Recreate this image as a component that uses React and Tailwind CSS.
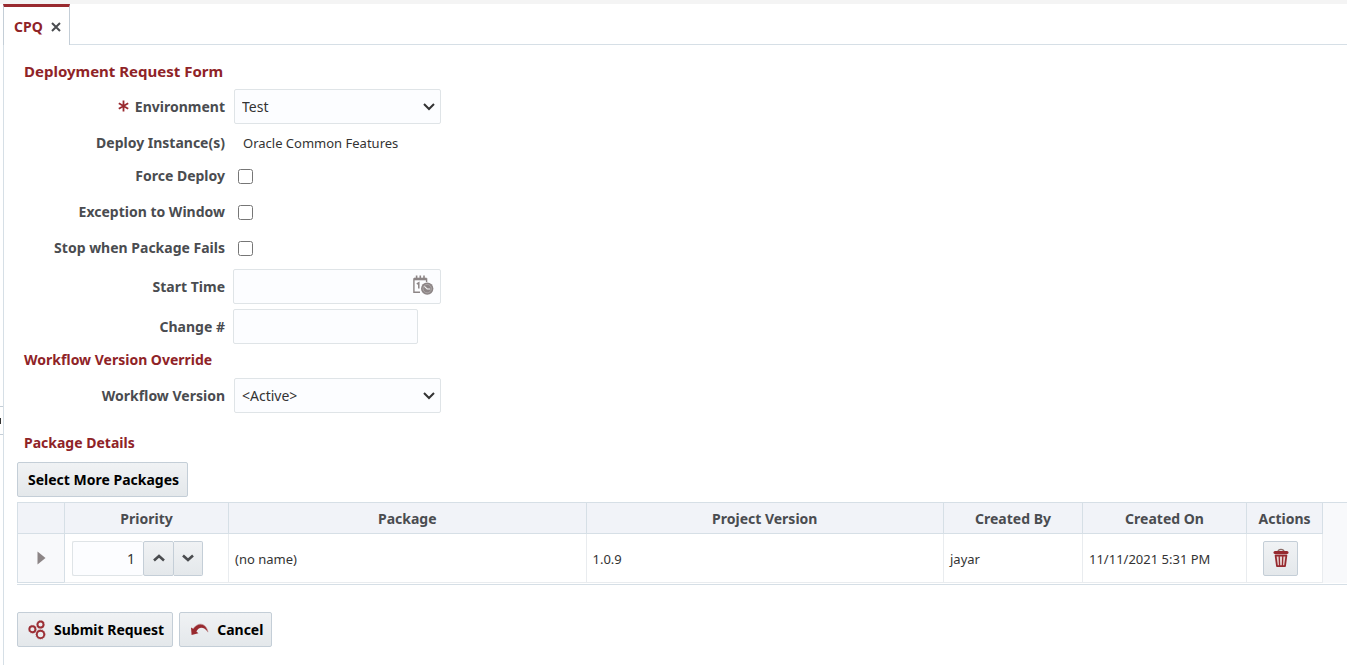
import React, { useState } from 'react';

const packages = [
  { id: 1, name: '(no name)', version: '1.0.9', createdBy: 'jayar', createdOn: '11/11/2021 5:31 PM' },
];

const buttonClass =
  'flex items-center h-[35px] border border-[#c4ced7] rounded-xs bg-gradient-to-b from-[#f0f2f4] to-[#e4e8eb] text-black font-bold';

const inputClass = 'h-[35px] border border-[#dfe4e7] rounded-xs bg-[#fcfdff] text-[#333333]';

const GearsIcon = () => (
  <svg width="18" height="20" viewBox="0 0 18 20" fill="none" stroke="#9c2f35" aria-hidden="true">
    <g strokeWidth="1.9">
      <circle cx="4.4" cy="9.3" r="3" />
      <circle cx="12.5" cy="4.5" r="3" />
      <circle cx="12.5" cy="14.4" r="3.7" />
    </g>
    <g strokeWidth="0.8" strokeDasharray="1.2 1.2" opacity="0.5">
      <circle cx="4.4" cy="9.3" r="4" />
      <circle cx="12.5" cy="4.5" r="4" />
      <circle cx="12.5" cy="14.4" r="4.9" />
    </g>
  </svg>
);

const UndoIcon = () => (
  <svg width="19" height="14" viewBox="0 0 19 14" aria-hidden="true">
    <path
      d="M1 4.5 L1.6 12 L8.4 10.2 L6.4 8.4 C8.4 4 13.6 2.6 18 9.2 C16.4 0.4 8.4 -1.8 3.2 5.8 Z"
      fill="#992a2f"
    />
    <path d="M18 9.2 C16.4 0.4 8.4 -1.8 3.2 5.8" fill="none" stroke="#b98588" strokeWidth="0.6" />
  </svg>
);

const TrashIcon = () => (
  <svg width="16" height="20" viewBox="0 0 16 20" fill="none" stroke="#96292e" aria-hidden="true">
    <path d="M5 3.5 C5.4 0.6 10.6 0.6 11 3.5" stroke="#8a6a66" strokeWidth="1.4" />
    <path d="M2 4.6 H14" strokeWidth="3" strokeLinecap="round" />
    <path d="M2.6 7.5 L4 18.2 H12 L13.4 7.5 Z" fill="#e6d3d1" strokeWidth="1.8" strokeLinejoin="round" />
    <path d="M6.2 8 L6.6 18 M9.8 8 L9.4 18" strokeWidth="1.3" />
  </svg>
);

const CalendarClockIcon = () => (
  <svg width="21" height="21" viewBox="0 0 21 21" fill="none" stroke="#8c8586" aria-hidden="true">
    <path d="M7 17.3 H0.9 V4 H13.6 V7" strokeWidth="1.4" />
    <path d="M1 4 H13.6" strokeWidth="2.6" />
    <path d="M3.6 0.5 V4 M7.3 0.5 V4 M11 0.5 V4" strokeWidth="1.6" />
    <path d="M3.8 9 L5.8 7.8 V13.5" strokeWidth="1.5" />
    <circle cx="14.2" cy="13.6" r="6.2" fill="#8c8586" stroke="none" />
    <circle cx="14.2" cy="13.6" r="4.2" stroke="#b4aeaf" strokeWidth="0.8" />
    <path d="M11.4 11.4 L14.2 14 H17.2" stroke="#f4f4f4" strokeWidth="1.1" />
  </svg>
);

const Chevron = ({ up }) => (
  <svg width="12" height="8" viewBox="0 0 12 8" fill="none" stroke="#4a4c4f" strokeWidth="2.6" aria-hidden="true">
    <path d={up ? 'M1 6.5 L6 2 L11 6.5' : 'M1 1.5 L6 6 L11 1.5'} />
  </svg>
);

const Field = ({ label, htmlFor, required, className = '', children }) => (
  <div className={`flex items-center ${className}`}>
    <label htmlFor={htmlFor} className="w-52 shrink-0 text-right font-bold text-[#4a4c50]">
      {required && (
        <svg className="inline-block mr-1.5 mb-1" width="11" height="12" viewBox="0 0 11 12" stroke="#992a2f" strokeWidth="1.8" aria-hidden="true">
          <path d="M5.5 0.5 V11.5 M0.8 3.2 L10.2 8.8 M10.2 3.2 L0.8 8.8" />
        </svg>
      )}
      {label}
    </label>
    {children}
  </div>
);

const Select = ({ id, value, onChange, children }) => (
  <div className="relative ml-[9px] w-[207px]">
    <select
      id={id}
      value={value}
      onChange={(e) => onChange(e.target.value)}
      className={`${inputClass} w-full appearance-none pl-[7px] pr-6`}
    >
      {children}
    </select>
    <svg
      className="absolute right-1.5 top-[14px] pointer-events-none"
      width="12"
      height="8"
      viewBox="0 0 12 8"
      fill="none"
      stroke="#333333"
      strokeWidth="2"
      aria-hidden="true"
    >
      <path d="M1 1 L6 6 L11 1" />
    </svg>
  </div>
);

const Heading = ({ className, children }) => (
  <h2 className={`pl-[7px] flex items-center font-bold text-[#8f2327] ${className}`}>{children}</h2>
);

const App = () => {
  const [environment, setEnvironment] = useState('Test');
  const [workflow, setWorkflow] = useState('active');
  const [options, setOptions] = useState({ force: false, exception: false, stop: false });
  const [startTime, setStartTime] = useState('');
  const [change, setChange] = useState('');
  const [priority, setPriority] = useState(1);

  const toggle = (key) => setOptions({ ...options, [key]: !options[key] });

  const checkboxClass = 'ml-[13px] w-[15px] h-[15px]';
  const headClass = 'border-l border-b border-[#d6dfe6] pt-0.5 font-bold text-center';
  const cellClass = 'border-l border-b border-[#e9ecef] px-1.5';
  const textCellClass = `${cellClass} pt-0.5 text-[13px]`;

  return (
    <div className="min-h-screen flex flex-col bg-white text-sm leading-5 text-[#333333] font-['Noto_Sans','Open_Sans',sans-serif]">
      <div className="h-1 bg-[#f4f4f4]" />
      <div className="flex flex-1">
        {/* Splitter handle */}
        <div className="w-[3px] shrink-0 flex flex-col">
          <div className="mt-[402px] h-[29px] border-y border-[#c4ced7] flex items-center">
            <span className="w-px h-1.5 bg-[#333333]" />
          </div>
        </div>

        <div className="flex-1 min-w-0">
          {/* Tabs */}
          <div className="flex h-[41px]">
            <div className="w-[67px] flex items-center gap-2 border-t-3 border-x border-t-[#992a2f] border-x-[#c4ced7] pt-0.5 pl-2.5">
              <a href="#cpq" className="font-bold text-[#8f2327]">CPQ</a>
              <button type="button" aria-label="Close tab">
                <svg width="10" height="10" viewBox="0 0 10 10" stroke="#4a4c50" strokeWidth="2" aria-hidden="true">
                  <path d="M1 1 L9 9 M9 1 L1 9" />
                </svg>
              </button>
            </div>
            <div className="flex-1 border-b border-[#d6dfe6]" />
          </div>

          <form
            className="border-l border-[#d6dfe6] pl-[13px] min-h-[calc(100vh-45px)]"
            onSubmit={(e) => e.preventDefault()}
          >
            <Heading className="h-11 pt-2 text-[15px]">Deployment Request Form</Heading>
            <Field label="Environment" htmlFor="environment" required>
              <Select id="environment" value={environment} onChange={setEnvironment}>
                <option>Test</option>
              </Select>
            </Field>
            <Field label="Deploy Instance(s)" htmlFor="instances" className="h-9 pt-0.5">
              <output id="instances" className="ml-[18px] text-[13px]">Oracle Common Features</output>
            </Field>
            <Field label="Force Deploy" htmlFor="force" className="h-8">
              <input id="force" type="checkbox" checked={options.force} onChange={() => toggle('force')} className={checkboxClass} />
            </Field>
            <Field label="Exception to Window" htmlFor="exception" className="h-10">
              <input id="exception" type="checkbox" checked={options.exception} onChange={() => toggle('exception')} className={checkboxClass} />
            </Field>
            <Field label="Stop when Package Fails" htmlFor="stop" className="h-8">
              <input id="stop" type="checkbox" checked={options.stop} onChange={() => toggle('stop')} className={checkboxClass} />
            </Field>
            <Field label="Start Time" htmlFor="start" className="mt-[5px]">
              <div className={`${inputClass} ml-2 w-52 flex items-center`}>
                <input
                  id="start"
                  type="text"
                  value={startTime}
                  onChange={(e) => setStartTime(e.target.value)}
                  className="flex-1 min-w-0 px-2 outline-none"
                />
                <button type="button" aria-label="Select date and time" className="mr-1.5 mb-0.5">
                  <CalendarClockIcon />
                </button>
              </div>
            </Field>
            <Field label="Change #" htmlFor="change" className="mt-[5px]">
              <input
                id="change"
                type="text"
                value={change}
                onChange={(e) => setChange(e.target.value)}
                className={`${inputClass} ml-2 w-[185px] px-2`}
              />
            </Field>

            <Heading className="h-[34px] pb-0.5">Workflow Version Override</Heading>
            <Field label="Workflow Version" htmlFor="workflow">
              <Select id="workflow" value={workflow} onChange={setWorkflow}>
                <option value="active">&lt;Active&gt;</option>
              </Select>
            </Field>

            <Heading className="h-[49px] pt-2.5">Package Details</Heading>
            <button type="button" className={`${buttonClass} pl-2.5 pr-2`}>Select More Packages</button>

            <table className="mt-[5px] w-full table-fixed border-separate border-spacing-0 border-y border-[#d6dfe6] pb-px">
              <colgroup>
                <col className="w-[47px]" />
                <col className="w-[164px]" />
                <col />
                <col />
                <col className="w-[139px]" />
                <col className="w-[164px]" />
                <col className="w-[76px]" />
                <col className="w-[25px]" />
              </colgroup>
              <thead>
                <tr className="h-[31px] bg-[#f1f3f8] text-[#4a4c50]">
                  <th className={headClass} aria-label="Expand" />
                  <th className={headClass}>Priority</th>
                  <th className={headClass}>Package</th>
                  <th className={headClass}>Project Version</th>
                  <th className={headClass}>Created By</th>
                  <th className={headClass}>Created On</th>
                  <th className={headClass}>Actions</th>
                  <td className="border-l border-[#d6dfe6] bg-[#f8f9fb]" />
                </tr>
              </thead>
              <tbody>
                {packages.map((pkg) => (
                  <tr key={pkg.id} className="h-[49px]">
                    <td className="border-l border-b border-[#d6dfe6] bg-[#f8f9fb]">
                      <button type="button" aria-label="Expand row" className="block mx-auto">
                        <svg width="9" height="14" viewBox="0 0 9 14" aria-hidden="true">
                          <path d="M0.5 0.5 L8.5 7 L0.5 13.5 Z" fill="#8c8586" />
                        </svg>
                      </button>
                    </td>
                    <td className="border-l border-b border-l-[#d6dfe6] border-b-[#e9ecef] px-[7px]">
                      <div className="flex">
                        <input
                          type="text"
                          aria-label="Priority"
                          value={priority}
                          onChange={(e) => setPriority(Number(e.target.value) || 0)}
                          className={`${inputClass} w-[71px] border-r-0 pr-2 text-right`}
                        />
                        <button
                          type="button"
                          aria-label="Increase"
                          onClick={() => setPriority(priority + 1)}
                          className={`${buttonClass} w-[31px] justify-center rounded-none`}
                        >
                          <Chevron up />
                        </button>
                        <button
                          type="button"
                          aria-label="Decrease"
                          onClick={() => setPriority(priority - 1)}
                          className={`${buttonClass} w-[29px] justify-center rounded-l-none border-l-0`}
                        >
                          <Chevron />
                        </button>
                      </div>
                    </td>
                    <td className={textCellClass}>{pkg.name}</td>
                    <td className={textCellClass}>{pkg.version}</td>
                    <td className={textCellClass}>{pkg.createdBy}</td>
                    <td className={textCellClass}>{pkg.createdOn}</td>
                    <td className={cellClass}>
                      <button type="button" aria-label="Delete" className={`${buttonClass} w-[35px] justify-center ml-2.5`}>
                        <TrashIcon />
                      </button>
                    </td>
                    <td className="border-l border-[#e9ecef] bg-[#f8f9fb]" />
                  </tr>
                ))}
              </tbody>
            </table>

            <div className="mt-[27px] flex gap-1.5">
              <button type="submit" className={`${buttonClass} pl-2.5 pr-2 gap-2`}>
                <GearsIcon />
                Submit Request
              </button>
              <button type="button" className={`${buttonClass} pl-2.5 pr-2 gap-2`}>
                <UndoIcon />
                Cancel
              </button>
            </div>
          </form>
        </div>
      </div>
    </div>
  );
};

export default App;
